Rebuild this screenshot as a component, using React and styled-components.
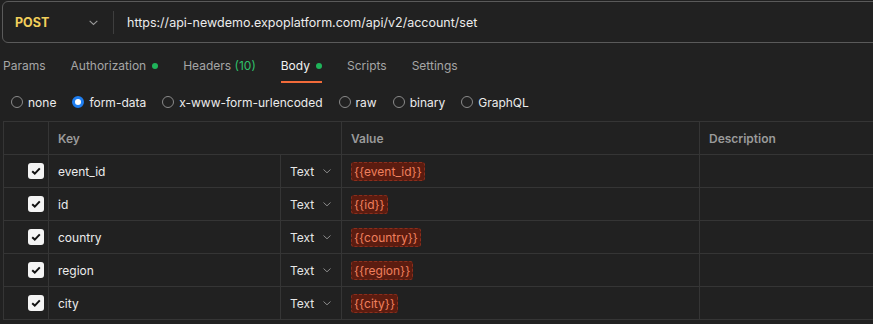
import React from "react";
import styled, { createGlobalStyle } from "styled-components";

const Global = createGlobalStyle`
  body {
    margin: 0;
    background: #212121;
    font-family: Inter, "Noto Sans", sans-serif;
  }
`;

const Page = styled.div`
  width: 873px;
  height: 324px;
  overflow: hidden;
  background: #212121;
`;

const RequestBar = styled.div`
  display: flex;
  align-items: center;
  width: 890px;
  height: 42px;
  margin: 1px 0 0 2px;
  border: 1px solid #5a5a5a;
  border-radius: 6px;
  box-sizing: border-box;
`;

const Method = styled.div`
  display: flex;
  align-items: center;
  justify-content: space-between;
  box-sizing: border-box;
  width: 110px;
  padding: 0 14px 0 12px;
  font-size: 12.5px;
  font-weight: 700;
  color: #f2cf5b;
`;

const Divider = styled.div`
  width: 1px;
  height: 23px;
  background: #3e3e3e;
`;

const Url = styled.div`
  padding-left: 13px;
  font-size: 12.5px;
  color: #ececec;
`;

const Tabs = styled.div`
  display: flex;
  height: 40px;
  padding-left: 3px;
`;

const Tab = styled.div`
  display: flex;
  align-items: center;
  gap: 6px;
  margin-right: 25px;
  padding-top: 7px;
  font-size: 12px;
  color: ${(p) => (p.active ? "#f1f1f1" : "#a6a6a6")};
  border-bottom: 2px solid ${(p) => (p.active ? "#f26b3a" : "transparent")};
  box-sizing: border-box;
  height: 40px;
`;

const Dot = styled.span`
  width: 6px;
  height: 6px;
  border-radius: 50%;
  background: #1fb45a;
`;

const Count = styled.span`
  color: #2fc06a;
`;

const Radios = styled.div`
  display: flex;
  align-items: center;
  height: 38px;
  padding-left: 11px;
  gap: 16px;
`;

const RadioItem = styled.label`
  display: flex;
  align-items: center;
  gap: 5px;
  font-size: 12px;
  color: #ececec;
`;

const Circle = styled.span`
  width: 12px;
  height: 12px;
  box-sizing: border-box;
  border-radius: 50%;
  border: ${(p) => (p.on ? "3px solid #1f7ef0" : "1px solid #8a8a8a")};
  background: ${(p) => (p.on ? "#ffffff" : "transparent")};
`;

const Table = styled.div`
  margin-left: 3px;
  width: 900px;
  border-top: 1px solid #353535;
  border-left: 1px solid #353535;
`;

const Row = styled.div`
  display: grid;
  grid-template-columns: 45px 232px 61px 358px 1fr;
  height: 33px;
  border-bottom: 1px solid #353535;
  box-sizing: border-box;
`;

const Cell = styled.div`
  display: flex;
  align-items: center;
  box-sizing: border-box;
  border-right: 1px solid #353535;
  padding-left: ${(p) => p.pad || 0}px;
  padding-right: ${(p) => (p.end ? 4 : 0)}px;
  justify-content: ${(p) => (p.end ? "flex-end" : "flex-start")};
  grid-column: ${(p) => p.span || "auto"};
`;

const HeadText = styled.span`
  font-size: 12px;
  font-weight: 600;
  color: #9a9a9a;
`;

const KeyText = styled.span`
  font-size: 12px;
  color: #ececec;
`;

const TypeSel = styled.div`
  display: flex;
  align-items: center;
  gap: 8px;
  font-size: 12px;
  color: #e6e6e6;
`;

const Check = styled.span`
  display: flex;
  align-items: center;
  justify-content: center;
  width: 16px;
  height: 16px;
  border-radius: 3px;
  background: #f4f4f4;
`;

const VarPill = styled.span`
  padding: 1px 2px;
  font-size: 12px;
  color: #f0805e;
  background: #5b1c10;
  border: 1px dashed #8c2e1c;
  border-radius: 3px;
`;

const Chevron = ({ color = "#8a8a8a", size = 10 }) => (
  <svg width={size} height={size} viewBox="0 0 10 10" fill="none">
    <path d="M1.5 3.5 L5 6.8 L8.5 3.5" stroke={color} strokeWidth="1" />
  </svg>
);

const rows = ["event_id", "id", "country", "region", "city"];
const bodyTypes = ["none", "form-data", "x-www-form-urlencoded", "raw", "binary", "GraphQL"];

export default function App() {
  return (
    <Page>
      <Global />
      <RequestBar>
        <Method>
          POST
          <Chevron color="#9a9a9a" size={11} />
        </Method>
        <Divider />
        <Url>https://api-newdemo.expoplatform.com/api/v2/account/set</Url>
      </RequestBar>
      <Tabs>
        <Tab>Params</Tab>
        <Tab>
          Authorization <Dot />
        </Tab>
        <Tab>
          <span>
            Headers <Count>(10)</Count>
          </span>
        </Tab>
        <Tab active>
          Body <Dot />
        </Tab>
        <Tab>Scripts</Tab>
        <Tab>Settings</Tab>
      </Tabs>
      <Radios>
        {bodyTypes.map((t) => (
          <RadioItem key={t}>
            <Circle on={t === "form-data"} />
            {t}
          </RadioItem>
        ))}
      </Radios>
      <Table>
        <Row>
          <Cell />
          <Cell span="span 2" pad={9}>
            <HeadText>Key</HeadText>
          </Cell>
          <Cell pad={9}>
            <HeadText>Value</HeadText>
          </Cell>
          <Cell pad={9}>
            <HeadText>Description</HeadText>
          </Cell>
        </Row>
        {rows.map((k) => (
          <Row key={k}>
            <Cell end>
              <Check>
                <svg width="12" height="12" viewBox="0 0 12 12" fill="none">
                  <path d="M2.2 6.2 L4.8 8.6 L9.8 3.4" stroke="#111" strokeWidth="2" />
                </svg>
              </Check>
            </Cell>
            <Cell pad={9}>
              <KeyText>{k}</KeyText>
            </Cell>
            <Cell pad={9}>
              <TypeSel>
                Text
                <Chevron />
              </TypeSel>
            </Cell>
            <Cell pad={9}>
              <VarPill>{`{{${k}}}`}</VarPill>
            </Cell>
            <Cell />
          </Row>
        ))}
      </Table>
    </Page>
  );
}
